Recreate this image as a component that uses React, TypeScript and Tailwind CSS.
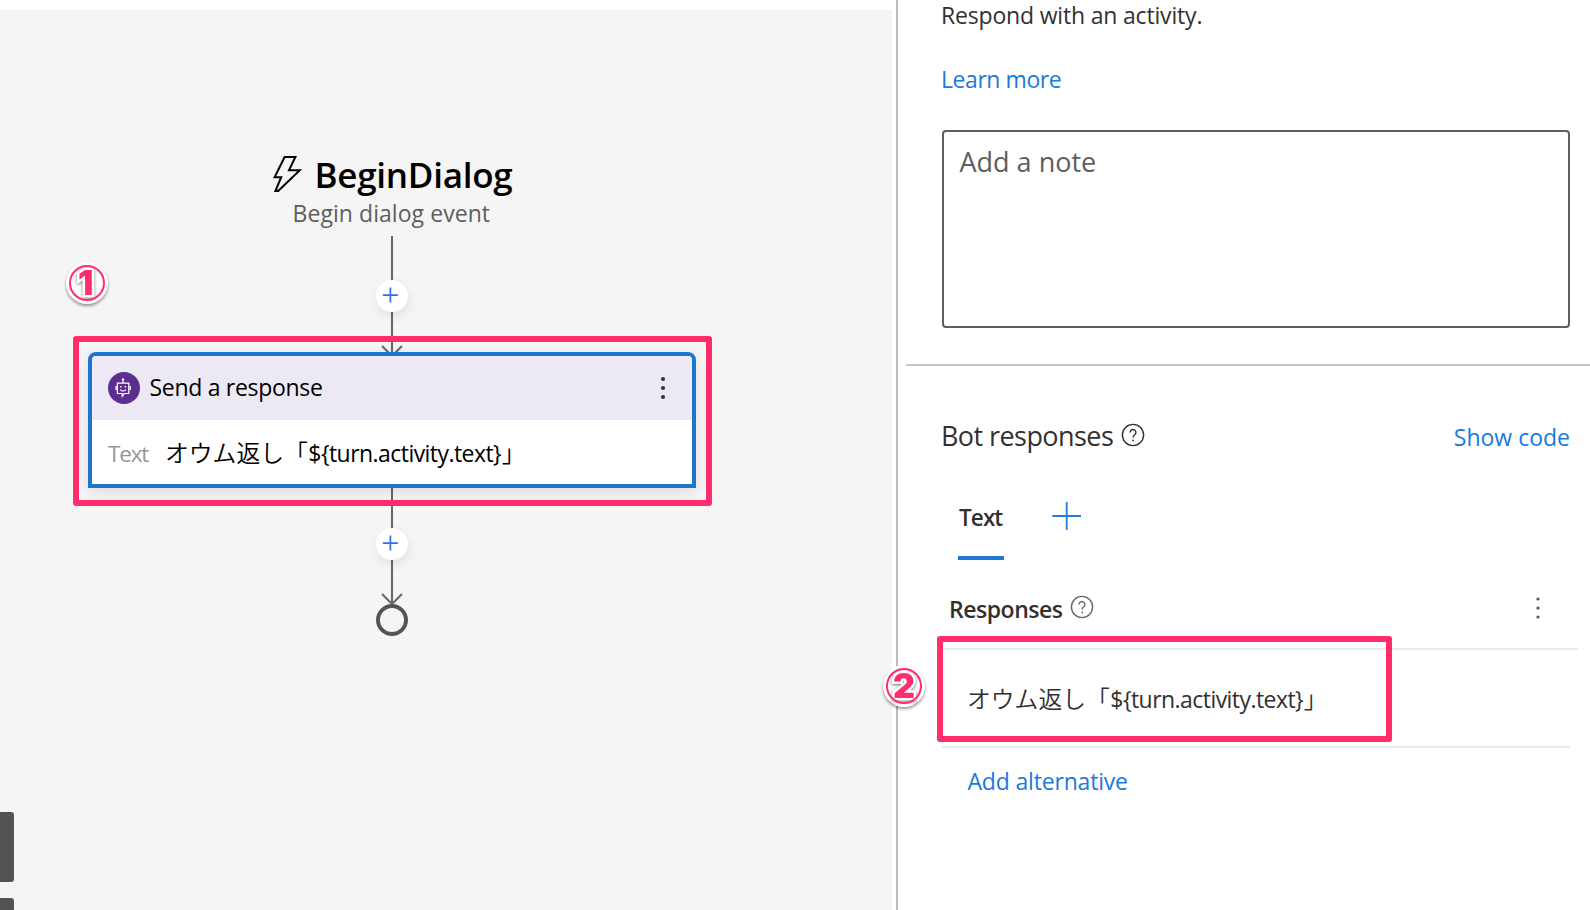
function HelpIcon({ className }: { className: string }) {
  return (
    <svg className={className} width="24" height="24" viewBox="0 0 24 24" fill="none" stroke="currentColor" strokeWidth="1.4">
      <circle cx="12" cy="12" r="10.6" />
      <path d="M9.1 9.4a2.9 2.9 0 1 1 4.6 2.4c-1 .8-1.6 1.3-1.6 2.7" />
      <circle cx="12.1" cy="17.4" r="0.9" fill="currentColor" stroke="none" />
    </svg>
  );
}

function MoreDots({ r, className }: { r: number; className: string }) {
  return (
    <svg className={className} width="8" height="24" viewBox="0 0 8 24" fill="currentColor">
      <circle cx="4" cy="3" r={r} />
      <circle cx="4" cy="12" r={r} />
      <circle cx="4" cy="21" r={r} />
    </svg>
  );
}

function BotIcon() {
  return (
    <svg width="32" height="32" viewBox="0 0 32 32" fill="none" stroke="white" strokeWidth="1.2" className="shrink-0">
      <circle cx="16" cy="16" r="16" fill="#5c2d91" stroke="none" />
      <circle cx="15" cy="7.4" r="1.2" fill="white" stroke="none" />
      <path d="M15 8v3M9.4 11.2h11.4v10.3h-4.3l-2.3 2.8v-2.8H9.4zM8 14v4M22.2 14v4" />
      <path d="M12.2 17.6c1.5 1.9 4.3 1.9 5.8 0" strokeWidth="1.1" />
      <rect x="12" y="14" width="1.5" height="1.5" fill="white" stroke="none" />
      <rect x="16.7" y="14" width="1.5" height="1.5" fill="white" stroke="none" />
    </svg>
  );
}

function AddNode({ className }: { className: string }) {
  return (
    <button className={`absolute left-[376px] flex size-8 rounded-full bg-white shadow-[1px_4px_12px_rgba(0,0,0,0.09)] ${className}`}>
      <svg width="32" height="32" viewBox="0 0 32 32" stroke="#2f6fed" strokeWidth="1.7">
        <path d="M14.4 7.6v15M6.9 15.1h15" />
      </svg>
    </button>
  );
}

function Badge({ n, x, className }: { n: string; x: number; className: string }) {
  return (
    <svg className={`absolute ${className}`} width="50" height="52" viewBox="0 0 50 52">
      <circle cx="25" cy="25" r="21" fill="white" className="drop-shadow-[0_2px_1.5px_rgba(0,0,0,0.4)]" />
      <g className="drop-shadow-[0_1px_1.5px_rgba(0,0,0,0.55)]">
        <text
          x={x} y="37.3" textAnchor="middle" fontSize="34" fill="#ff2d6b" stroke="white" strokeWidth="5" paintOrder="stroke"
          className="font-black font-['Inter',sans-serif]"
        >
          {n}
        </text>
      </g>
      <circle cx="25" cy="25" r="17" fill="none" stroke="#ff2d6b" strokeWidth="2" />
    </svg>
  );
}

function Template() {
  return (
    <span className="whitespace-nowrap">
      <span className="font-['Noto_Sans_CJK_JP',sans-serif] text-[23.8px] font-[350]">オウム返し「</span>
      <span className="ml-[0.5px] tracking-[-0.55px]">{"${turn.activity.text}"}</span>
      <span className="ml-[0.5px] font-['Noto_Sans_CJK_JP',sans-serif] text-[23.8px] font-[350]">」</span>
    </span>
  );
}

function FlowCanvas() {
  return (
    <main className="relative mt-[10px] w-[892px] shrink-0 overflow-hidden bg-[#f5f5f5]">
      <svg className="absolute left-0 top-[-10px]" width="892" height="910" fill="none" stroke="#666" strokeWidth="2">
        <path d="M392 236V354M382 346l10 10l10-10M392 486V604M382 594l10 10l10-10" />
        <circle cx="392" cy="620" r="14" stroke="#555" strokeWidth="4" />
      </svg>

      <div className="absolute left-[272px] top-[145px] flex w-[244px] flex-col">
        <div className="flex h-10 items-center">
          <svg width="30" height="38" viewBox="0 0 30 38" fill="none" stroke="black" strokeWidth="2" className="mt-[-3px] shrink-0">
            <path d="M12.6 2H23.4L17 15.2H27.8L6.2 36H3.4L9.2 22.2H2.6Z" />
          </svg>
          <h1 className="ml-[12.5px] text-[35px] font-semibold leading-[40px] tracking-[-0.27px] text-black">BeginDialog</h1>
        </div>
        <p className="ml-[20.5px] mt-[2px] whitespace-nowrap text-[23px] leading-[33px] tracking-[0.06px] text-[#605e5c]">Begin dialog event</p>
      </div>

      <AddNode className="top-[270px]" />
      <AddNode className="top-[518px]" />

      <section className="absolute left-[88px] top-[342px] flex h-[136px] w-[608px] flex-col rounded-t-[8px] border-4 border-[#1c74cc] bg-white shadow-[0_4px_14px_rgba(0,0,0,0.1)]">
        <header className="flex h-16 items-center rounded-t-[4px] bg-[#ede9f4] pl-4 pr-[25px]">
          <BotIcon />
          <h2 className="-mt-[2px] ml-[9.5px] flex-1 text-[23px] leading-[32px] tracking-[-0.3px] text-black">Send a response</h2>
          <MoreDots r={2.1} className="text-[#323130]" />
        </header>
        <div className="flex h-16 items-center pl-4 pt-px text-[23px] leading-[32px] text-black">
          <span className="w-[57px] pt-[2px] text-[22.5px] tracking-[-1.2px] text-[#979593]">Text</span>
          <Template />
        </div>
      </section>

      <div className="absolute left-[73px] top-[326px] h-[170px] w-[639px] rounded-[3px] border-[6px] border-[#ff2d6b]" />
      <Badge n="1" x={23.8} className="left-[62px] top-[248px]" />

      <div className="absolute left-0 top-[802px] h-[70px] w-[14px] rounded-r-[3px] bg-[#555253]" />
      <div className="absolute left-0 top-[888px] h-[70px] w-[14px] rounded-r-[3px] bg-[#555253]" />
    </main>
  );
}

function PropertyPanel() {
  return (
    <aside className="ml-1 flex flex-1 flex-col border-l-2 border-[#bbb] bg-white pl-2 text-[23px] leading-[32px] text-[#323130]">
      <section className="flex h-[366px] shrink-0 flex-col border-b-2 border-[#c6c6c6] pl-[35px] pr-5">
        <p className="mt-[-1px] tracking-[-0.18px]">Respond with an activity.</p>
        <a className="mt-[32px] tracking-[-0.44px] text-[#1a7ad9]">Learn more</a>
        <div className="ml-px mt-[35px] h-[198px] rounded-[4px] border-2 border-[#605e5c] pl-[15.5px] pt-[10px] text-[27px] leading-[40px] text-[#605e5c]">
          Add a note
        </div>
      </section>

      <section className="flex flex-col pl-[36px] pr-[12px]">
        <div className="mt-[50px] flex h-10 items-start pr-[8px]">
          <h2 className="-ml-px text-[27px] leading-[40px] tracking-[-0.57px]">Bot responses</h2>
          <HelpIcon className="ml-[8px] mt-[7px]" />
          <a className="ml-auto mt-[5px] tracking-[0px] text-[#1a7ad9]">Show code</a>
        </div>

        <div className="mt-[45px] flex h-[59px] pl-4">
          <div className="w-[46px] whitespace-nowrap border-b-4 border-[#1f75d8] pl-px pt-px text-[22.5px] font-semibold tracking-[-0.9px]">Text</div>
          <svg className="ml-[47px]" width="32" height="30" viewBox="0 0 32 30" stroke="#1f7bdc" strokeWidth="1.8">
            <path d="M15.7 1v28M1.4 15h28.6" />
          </svg>
        </div>

        <div className="mt-[33px] flex h-[57px] border-b-2 border-[#eaeaea] pl-[7px]">
          <h3 className="font-semibold tracking-[-0.46px]">Responses</h3>
          <HelpIcon className="ml-[7.5px] mt-[2px] text-[#666]" />
          <MoreDots r={1.6} className="ml-auto mr-[36px] mt-[3px] text-[#555]" />
        </div>

        <div className="mr-2 flex h-[98px] items-start border-b-2 border-[#eaeaea] pl-[25px] pt-[32px]">
          <Template />
        </div>
        <a className="mt-[17px] pl-[25.5px] tracking-[-0.18px] text-[#1a7ad9]">Add alternative</a>
      </section>
    </aside>
  );
}

export default function App() {
  return (
    <div className="relative flex h-[910px] w-[1590px] overflow-hidden bg-white font-['Open_Sans','Noto_Sans_CJK_JP',sans-serif]">
      <FlowCanvas />
      <PropertyPanel />
      <div className="absolute left-[937px] top-[636px] h-[106px] w-[455px] rounded-[3px] border-[6px] border-[#ff2d6b]" />
      <Badge n="2" x={25} className="left-[879px] top-[661px]" />
    </div>
  );
}
